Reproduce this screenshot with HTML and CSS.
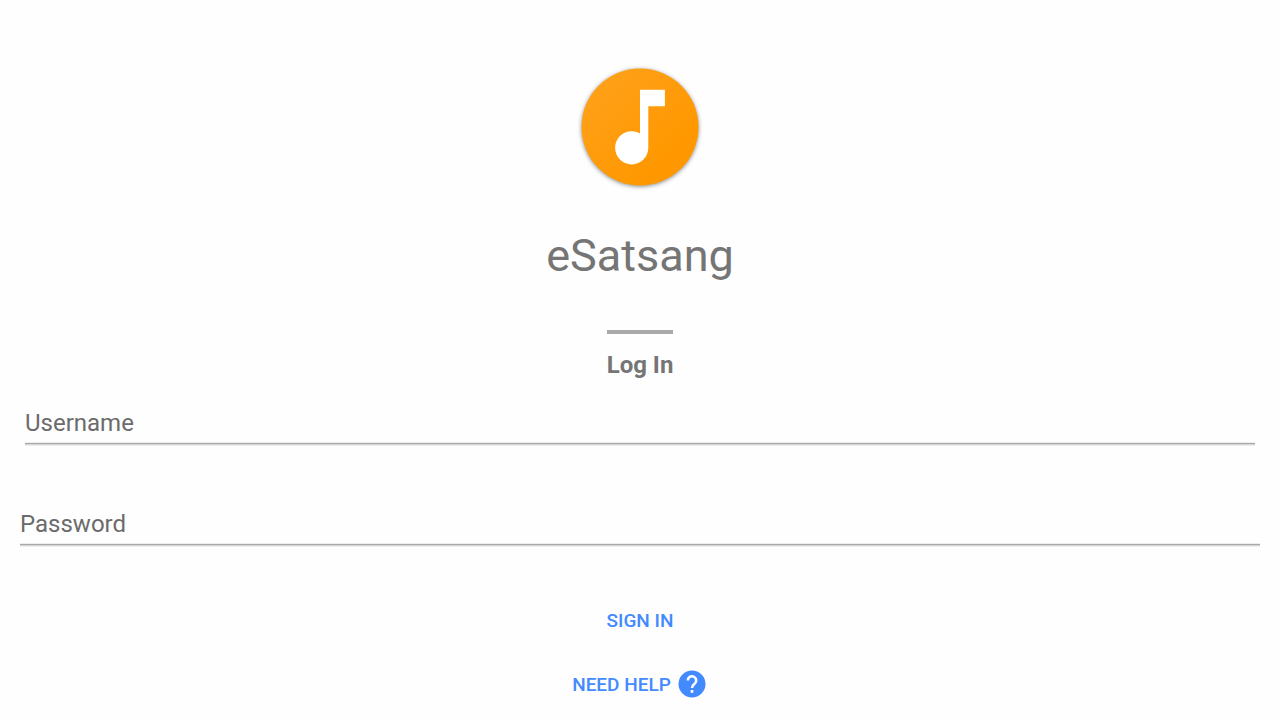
FILE: index.html
```html
<!DOCTYPE html>
<html lang="en">
<head>
  <meta charset="UTF-8">
  <meta name="viewport" content="width=device-width, initial-scale=1">
  <title>eSatsang</title>
  <link rel="stylesheet" href="styles.css">
</head>
<body>
  <main class="login">
    <svg class="logo" viewBox="0 0 128 128" aria-hidden="true">
      <defs>
        <linearGradient id="orange" x1="0" y1="0" x2="1" y2="1">
          <stop offset="0.15" stop-color="#ffa018"/>
          <stop offset="0.75" stop-color="#ff9800"/>
        </linearGradient>
      </defs>
      <circle cx="64" cy="63" r="58.500" fill="url(#orange)"/>
      <path transform="translate(14.2 13.3) scale(4.15)" fill="#fff" d="M12 3v10.55c-.59-.34-1.27-.55-2-.55-2.21 0-4 1.79-4 4s1.79 4 4 4 4-1.79 4-4V7h4V3h-6z"/>
    </svg>
    <h1>eSatsang</h1>
    <h2>Log In</h2>

    <form>
      <div class="field username">
        <input type="text" id="username" placeholder="Username" aria-label="Username">
      </div>
      <div class="field password">
        <input type="password" id="password" placeholder="Password" aria-label="Password">
      </div>
      <button type="button" class="btn">SIGN IN</button>
      <button type="button" class="btn help">
        NEED HELP
        <svg class="help-icon" viewBox="0 0 28 28" aria-hidden="true">
          <circle cx="14" cy="14" r="13.5" fill="#448aff"/>
          <path d="M9.8 10.500a4.2 4.2 0 1 1 7 3.1c-1.600 1.400-2.800 1.900-2.800 4.400" fill="none" stroke="#fff" stroke-width="2.600"/>
          <rect x="12.700" y="20" width="2.600" height="2.800" fill="#fff"/>
        </svg>
      </button>
    </form>
  </main>
</body>
</html>
```
FILE: styles.css
```css
* {
  box-sizing: border-box;
}
body {
  margin: 0;
  background: #fefefe;
  font-family: Roboto, sans-serif;
  color: #757575;
}
.login {
  display: flex;
  flex-direction: column;
  align-items: center;
  padding-top: 64px;
}
.logo {
  width: 128px;
  height: 128px;
  filter: drop-shadow(0 1px 2px rgba(0, 0, 0, 0.45));
}
h1 {
  margin: 34px 0 0;
  font-size: 45px;
  font-weight: 400;
  line-height: 60px;
}
h2 {
  margin: 44px 0 0;
  padding-top: 16px;
  border-top: 4px solid #a9a9a9;
  font-size: 24px;
  font-weight: 700;
  line-height: 30px;
}
form {
  display: flex;
  flex-direction: column;
  align-items: center;
  width: 100%;
}
.field {
  width: 100%;
}
.username {
  padding: 22px 25px 0;
}
.password {
  padding: 59px 20px 0;
}
.field input {
  display: block;
  width: 100%;
  height: 42px;
  padding: 0;
  border: none;
  border-bottom: 1px solid #a9a9a9;
  border-radius: 0;
  outline: none;
  background: transparent;
  box-shadow: inset 0 -1px 0 #eeeeee, 0 1px 0 #d6d6d6, 0 2px 0 #eeeeee;
  font: 24px Roboto, sans-serif;
  color: #424242;
}
.field input::placeholder {
  color: #6b6b6b;
  opacity: 1;
}
.btn {
  display: flex;
  align-items: center;
  height: 40px;
  margin-top: 55px;
  padding: 0;
  border: none;
  background: none;
  font: 500 19px Roboto, sans-serif;
  color: #448aff;
  cursor: pointer;
}
.help {
  gap: 7px;
  margin-top: 24px;
  padding-right: 2px;
}
.help-icon {
  width: 28px;
  height: 28px;
}
```
